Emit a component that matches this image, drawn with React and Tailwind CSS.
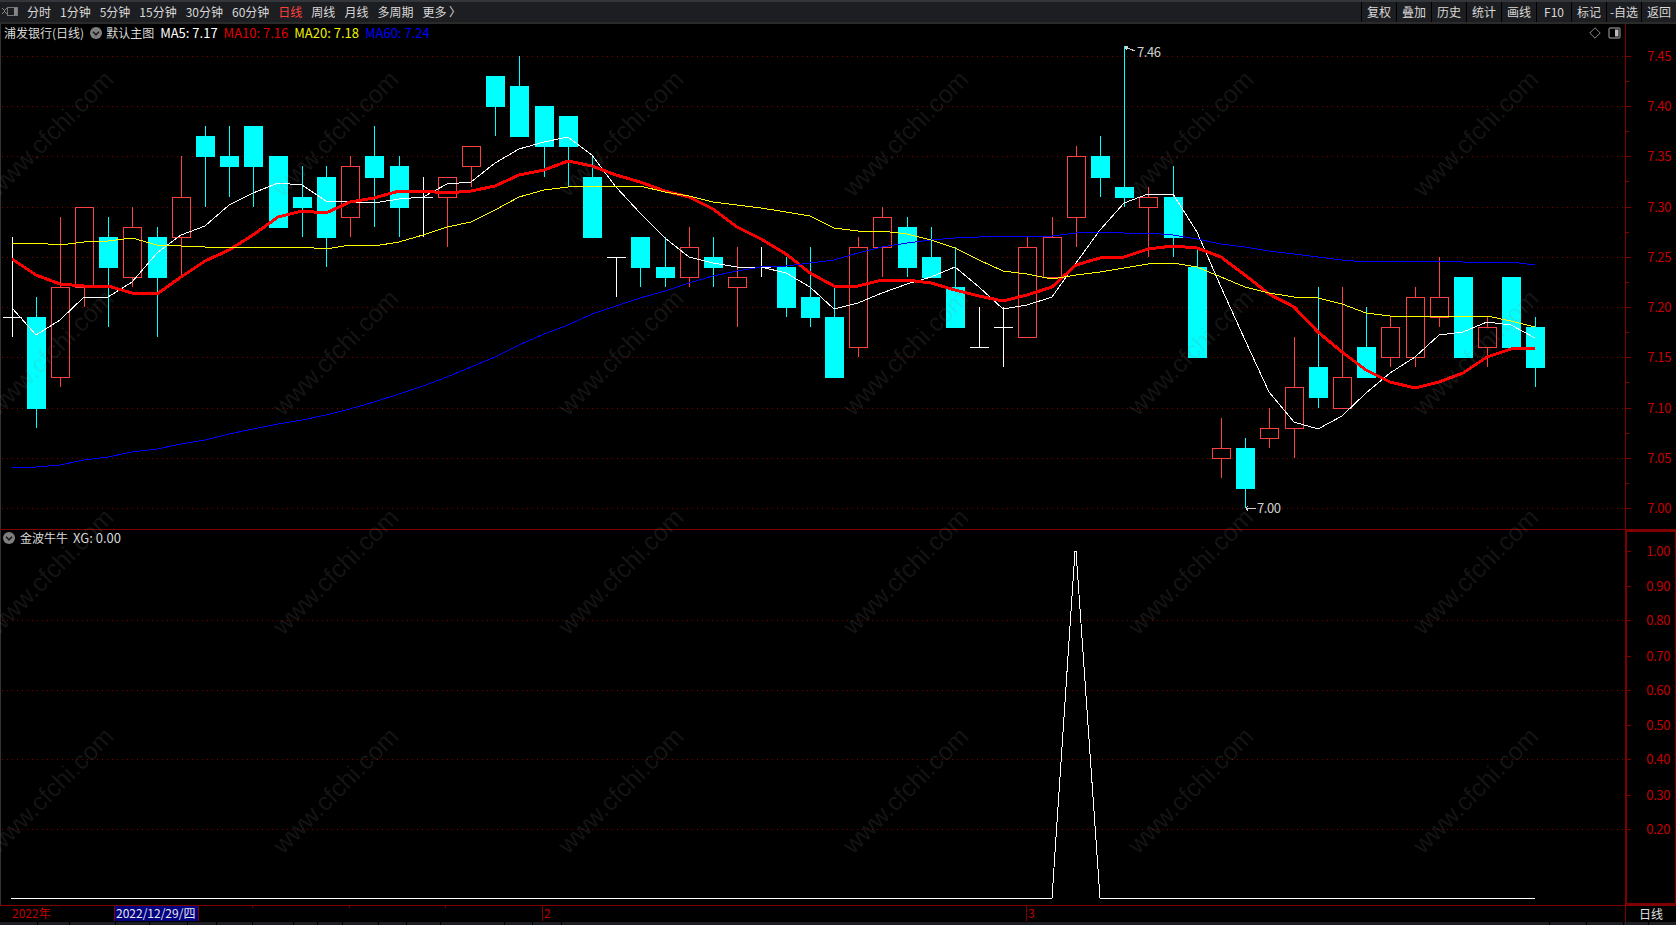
const X0 = 11.5;
const STEP = 24.19;
const xAt = (i) => Math.round(X0 + STEP * i);
const yAt = (p) => Math.round(56 + (7.45 - p) * 1004.4);

// type, body top, body bottom, high, low
const candles = [
  ["w", 7.19, 7.19, 7.27, 7.17],
  ["d", 7.19, 7.10, 7.21, 7.08],
  ["u", 7.22, 7.13, 7.29, 7.12],
  ["u", 7.30, 7.22, 7.30, 7.20],
  ["d", 7.27, 7.24, 7.29, 7.18],
  ["u", 7.28, 7.23, 7.30, 7.22],
  ["d", 7.27, 7.23, 7.28, 7.17],
  ["u", 7.31, 7.27, 7.35, 7.23],
  ["d", 7.37, 7.35, 7.38, 7.30],
  ["d", 7.35, 7.34, 7.38, 7.31],
  ["d", 7.38, 7.34, 7.38, 7.30],
  ["d", 7.35, 7.28, 7.35, 7.28],
  ["d", 7.31, 7.30, 7.34, 7.27],
  ["d", 7.33, 7.27, 7.34, 7.24],
  ["u", 7.34, 7.29, 7.35, 7.27],
  ["d", 7.35, 7.33, 7.38, 7.28],
  ["d", 7.34, 7.30, 7.35, 7.27],
  ["w", 7.31, 7.31, 7.33, 7.27],
  ["u", 7.33, 7.31, 7.33, 7.26],
  ["u", 7.36, 7.34, 7.36, 7.32],
  ["d", 7.43, 7.40, 7.43, 7.37],
  ["d", 7.42, 7.37, 7.45, 7.37],
  ["d", 7.40, 7.36, 7.40, 7.33],
  ["d", 7.39, 7.36, 7.39, 7.32],
  ["d", 7.33, 7.27, 7.35, 7.27],
  ["w", 7.25, 7.25, 7.25, 7.21],
  ["d", 7.27, 7.24, 7.27, 7.22],
  ["d", 7.24, 7.23, 7.27, 7.22],
  ["u", 7.26, 7.23, 7.28, 7.22],
  ["d", 7.25, 7.24, 7.27, 7.22],
  ["u", 7.23, 7.22, 7.26, 7.18],
  ["w", 7.24, 7.24, 7.26, 7.23],
  ["d", 7.24, 7.20, 7.25, 7.19],
  ["d", 7.21, 7.19, 7.26, 7.18],
  ["d", 7.19, 7.13, 7.22, 7.13],
  ["u", 7.26, 7.16, 7.27, 7.15],
  ["u", 7.29, 7.26, 7.30, 7.23],
  ["d", 7.28, 7.24, 7.29, 7.23],
  ["d", 7.25, 7.23, 7.28, 7.23],
  ["d", 7.22, 7.18, 7.26, 7.18],
  ["w", 7.16, 7.16, 7.20, 7.16],
  ["w", 7.18, 7.18, 7.20, 7.14],
  ["u", 7.26, 7.17, 7.27, 7.17],
  ["u", 7.27, 7.23, 7.29, 7.23],
  ["u", 7.35, 7.29, 7.36, 7.26],
  ["d", 7.35, 7.33, 7.37, 7.31],
  ["d", 7.32, 7.31, 7.46, 7.30],
  ["u", 7.31, 7.30, 7.32, 7.25],
  ["d", 7.31, 7.27, 7.34, 7.25],
  ["d", 7.24, 7.15, 7.26, 7.15],
  ["u", 7.06, 7.05, 7.09, 7.03],
  ["d", 7.06, 7.02, 7.07, 7.00],
  ["u", 7.08, 7.07, 7.10, 7.06],
  ["u", 7.12, 7.08, 7.17, 7.05],
  ["d", 7.14, 7.11, 7.22, 7.10],
  ["u", 7.13, 7.10, 7.22, 7.10],
  ["d", 7.16, 7.13, 7.20, 7.13],
  ["u", 7.18, 7.15, 7.19, 7.14],
  ["u", 7.21, 7.15, 7.22, 7.14],
  ["u", 7.21, 7.19, 7.25, 7.18],
  ["d", 7.23, 7.15, 7.23, 7.15],
  ["u", 7.18, 7.16, 7.19, 7.14],
  ["d", 7.23, 7.16, 7.23, 7.16],
  ["d", 7.18, 7.14, 7.19, 7.12],
];

const ma5 = [308,335,320,297,297,282,253,235,226,205,193,183,185,201,202,203,199,197,184,182,163,149,142,137,155,187,213,238,257,263,267,267,273,287,309,303,293,284,277,267,287,309,305,297,263,230,203,194,194,232,287,340,392,422,429,416,393,373,357,335,332,322,325,338];
const ma10 = [259,275,284,286,286,293,294,277,261,250,235,217,211,213,202,198,191,191,193,191,186,175,170,161,166,175,182,191,197,209,227,239,254,273,286,286,280,280,283,290,296,301,295,287,265,258,257,249,246,248,257,275,294,307,332,352,370,382,388,382,373,357,349,348];
const ma20 = [244,243,245,242,241,238,245,246,247,248,247,247,247,249,245,246,242,235,227,222,210,197,190,187,186,187,186,192,196,202,205,208,212,216,228,231,231,234,240,248,260,271,274,279,275,272,268,264,263,267,277,287,293,297,298,304,313,316,317,316,316,316,321,327];
const ma60 = [467,467,465,460,457,452,449,444,440,434,429,424,420,415,409,402,394,386,377,367,357,345,334,325,314,306,298,291,283,276,271,267,266,263,260,253,247,243,240,238,237,236,236,236,233,232,233,233,235,239,244,247,251,254,257,260,262,261,261,261,262,262,262,265];

const topLabels = ["7.45","7.40","7.35","7.30","7.25","7.20","7.15","7.10","7.05","7.00"];
const subLabels = [
  ["1.00", 551], ["0.90", 586], ["0.80", 620], ["0.70", 656], ["0.60", 690],
  ["0.50", 725], ["0.40", 759], ["0.30", 795], ["0.20", 829],
];
const subGrid = [620, 690, 759, 829];
const leftTabs = ["分时","1分钟","5分钟","15分钟","30分钟","60分钟","日线","周线","月线","多周期","更多 〉"];
const rightTabs = ["复权","叠加","历史","统计","画线","F10","标记","-自选","返回"];
const stripCells = [
  "w-[37px]","w-[31px]","w-[45px]","w-[33px]","w-[37px]","w-[28px]","w-[35px]","w-[40px]","w-[23px]","w-[24px]","w-[35px]","w-[27px]","w-[33px]","w-[63px]","w-[27px]","w-[28px]","flex-1","w-[36px]","w-[36px]","w-[24px]","w-[27px]",
];

const toPoints = (arr) => arr.map((y, i) => `${xAt(i)},${y}`).join(" ");

function Candle({ c, i }) {
  const [type, top, bot, hi, lo] = c;
  const x = xAt(i);
  const yTop = yAt(top);
  const yBot = yAt(bot);
  const yHi = yAt(hi);
  const yLo = yAt(lo);
  if (type === "w") {
    return (
      <g stroke="#ffffff" strokeWidth="1">
        <line x1={x + 0.5} x2={x + 0.5} y1={yHi} y2={yLo} />
        <line x1={x - 9} x2={x + 10} y1={yTop + 0.5} y2={yTop + 0.5} />
      </g>
    );
  }
  if (type === "d") {
    return (
      <g>
        <line x1={x + 0.5} x2={x + 0.5} y1={yHi} y2={yLo} stroke="#00ffff" />
        <rect x={x - 9} y={yTop} width="19" height={yBot - yTop + 1} fill="#00ffff" />
      </g>
    );
  }
  return (
    <g stroke="#ff4040">
      <line x1={x + 0.5} x2={x + 0.5} y1={yHi} y2={yTop} />
      <line x1={x + 0.5} x2={x + 0.5} y1={yBot} y2={yLo} />
      <rect x={x - 8.5} y={yTop + 0.5} width="18" height={yBot - yTop} fill="none" />
    </g>
  );
}

function CircleDown() {
  return (
    <svg width="12" height="12" viewBox="0 0 12 12" className="shrink-0">
      <circle cx="6" cy="6" r="6" fill="#7f7f7f" />
      <path d="M3 4.8 6 7.8 9 4.8" fill="none" stroke="#1a1a1a" strokeWidth="1.6" />
    </svg>
  );
}

function TopAxis() {
  const ticks = [];
  topLabels.forEach((l) => ticks.push(yAt(parseFloat(l))));
  return (
    <svg width="50" height="505" viewBox="0 24 50 505" className="block">
      {ticks.map((y) => (
        <line key={y} x1="0" x2="5" y1={y + 0.5} y2={y + 0.5} stroke="#800000" />
      ))}
      {ticks.slice(0, -1).map((y) => (
        <line key={y} x1="0" x2="3" y1={y + 25.5} y2={y + 25.5} stroke="#800000" />
      ))}
      {topLabels.map((l, i) => (
        <text key={l} x="45" y={ticks[i] + 5} textAnchor="end" fontSize="13" fill="#c00000" letterSpacing="-0.4">
          {l}
        </text>
      ))}
    </svg>
  );
}

function SubAxis() {
  return (
    <svg width="48" height="372" viewBox="0 532 48 372" className="block">
      {subLabels.map(([l, y]) => (
        <g key={l}>
          <line x1="0" x2="4" y1={y + 0.5} y2={y + 0.5} stroke="#800000" />
          <text x="43" y={y + 5} textAnchor="end" fontSize="13" fill="#c00000" letterSpacing="-0.4">
            {l}
          </text>
        </g>
      ))}
    </svg>
  );
}

export default function App() {
  return (
    <div className="relative flex h-screen w-full flex-col overflow-hidden bg-black font-['Noto_Sans_CJK_SC',sans-serif] text-[12px] text-[#d8d8d8]">
      {/* toolbar */}
      <div className="flex h-[24px] shrink-0 items-stretch border-t-2 border-b-2 border-t-[#33363b] border-b-[#2a2a2a] bg-[#1d1e21]">
        <svg width="18" height="20" viewBox="0 0 18 20" className="ml-[1px] shrink-0">
          <path d="M1 6 4 9 1 12M6 6 3 9 6 12" fill="none" stroke="#8a8a8a" />
          <rect x="6.5" y="5.5" width="10" height="8" fill="none" stroke="#777" />
          <rect x="13" y="6" width="3" height="7" fill="#888" />
        </svg>
        <div className="ml-[8px] flex items-center gap-[9px] whitespace-nowrap">
          {leftTabs.map((t) => (
            <span key={t} className={t === "日线" ? "text-[#ff4040]" : ""}>{t}</span>
          ))}
        </div>
        <div className="ml-auto flex">
          {rightTabs.map((t) => (
            <div key={t} className="flex w-[35px] items-center justify-center border-l border-black whitespace-nowrap">{t}</div>
          ))}
        </div>
      </div>

      {/* main chart */}
      <div className="flex h-[506px] shrink-0 border-b border-[#800000]">
        <div className="flex w-[1625px] shrink-0 flex-col border-l border-[#333]">
          <div className="flex h-[18px] shrink-0 items-center pb-[1px] whitespace-nowrap">
            <span className="ml-[3px]">浦发银行(日线)</span>
            <span className="ml-[6px]"><CircleDown /></span>
            <span className="ml-[4px]">默认主图</span>
            <span className="ml-[6px] text-[13px] text-white">MA5: 7.17</span>
            <span className="ml-[6px] text-[13px] text-[#e00000]">MA10: 7.16</span>
            <span className="ml-[6px] text-[13px] text-[#f0f000]">MA20: 7.18</span>
            <span className="ml-[6px] text-[13px] text-[#0000ff]">MA60: 7.24</span>
            <svg width="12" height="12" viewBox="0 0 12 12" className="ml-auto">
              <path d="M6 .8 11.2 6 6 11.2 .8 6Z" fill="none" stroke="#8a8a8a" />
            </svg>
            <svg width="13" height="12" viewBox="0 0 13 12" className="mr-[4px] ml-[7px]">
              <rect x="1" y="1" width="11" height="10" rx="1.5" fill="none" stroke="#777" strokeWidth="1.4" />
              <rect x="7" y="2.5" width="3.5" height="7" fill="#bbb" />
            </svg>
          </div>
          <svg width="1624" height="487" viewBox="1 42 1624 487" className="block shrink-0" shapeRendering="crispEdges">
            {topLabels.map((l) => (
              <line key={l} x1="2" x2="1625" y1={yAt(parseFloat(l)) + 0.5} y2={yAt(parseFloat(l)) + 0.5} stroke="#800000" strokeDasharray="1 4" />
            ))}
            {candles.map((c, i) => <Candle key={i} c={c} i={i} />)}
            <polyline points={toPoints(ma5)} fill="none" stroke="#ffffff" strokeWidth="1" />
            <polyline points={toPoints(ma10)} fill="none" stroke="#ff0000" strokeWidth="3" />
            <polyline points={toPoints(ma20)} fill="none" stroke="#ffff00" strokeWidth="1" />
            <polyline points={toPoints(ma60)} fill="none" stroke="#0000ff" strokeWidth="1" />
            <path d="M1125 47 1135 51M1125 47 1128 46M1125 47 1127 50" fill="none" stroke="#d0d0d0" />
            <path d="M1246 508 1256 508M1246 508 1248 506M1246 508 1248 511" fill="none" stroke="#d0d0d0" />
            <text x="1137" y="57" fontSize="13" fill="#d0d0d0" shapeRendering="auto" letterSpacing="-0.4">7.46</text>
            <text x="1257" y="513" fontSize="13" fill="#d0d0d0" shapeRendering="auto" letterSpacing="-0.4">7.00</text>
          </svg>
        </div>
        <div className="flex-1 border-l border-[#800000]">
          <TopAxis />
        </div>
      </div>

      {/* indicator */}
      <div className="flex h-[376px] shrink-0 border-b border-[#800000]">
        <div className="flex w-[1625px] shrink-0 flex-col border-l border-[#333]">
          <div className="flex h-[17px] shrink-0 items-center pb-[2px] whitespace-nowrap">
            <span className="ml-[2px]"><CircleDown /></span>
            <span className="ml-[5px]">金波牛牛</span>
            <span className="ml-[5px] text-[13px]">XG: 0.00</span>
          </div>
          <svg width="1624" height="358" viewBox="1 547 1624 358" className="block shrink-0" shapeRendering="crispEdges">
            {subGrid.map((y) => (
              <line key={y} x1="2" x2="1625" y1={y + 0.5} y2={y + 0.5} stroke="#800000" strokeDasharray="1 4" />
            ))}
            <polyline points="11,898 1052,898 1075,551 1076,551 1100,898 1535,898" fill="none" stroke="#ffffff" strokeWidth="1" />
          </svg>
        </div>
        <div className="flex-1 border-2 border-[#800000]">
          <SubAxis />
        </div>
      </div>

      {/* date row */}
      <div className="flex h-[16px] shrink-0">
        <svg width="1625" height="16" viewBox="0 906 1625 16" className="block shrink-0 overflow-visible">
          <text x="12" y="918" fontSize="12" fill="#c00000">2022年</text>
          <rect x="114" y="906" width="85" height="15" fill="#000080" />
          <line x1="114.5" x2="114.5" y1="906" y2="921" stroke="#800000" />
          <line x1="198.5" x2="198.5" y1="906" y2="921" stroke="#800000" />
          <text x="116" y="918" fontSize="12" fill="#e8e8e8">2022/12/29/四</text>
          {[252, 349, 445].map((x) => (
            <line key={x} x1={x + 0.5} x2={x + 0.5} y1="906" y2="908" stroke="#800000" />
          ))}
          <line x1="542.5" x2="542.5" y1="906" y2="921" stroke="#800000" />
          <text x="544" y="918" fontSize="12" fill="#c00000">2</text>
          <line x1="1026.5" x2="1026.5" y1="906" y2="921" stroke="#800000" />
          <text x="1028" y="918" fontSize="12" fill="#c00000">3</text>
        </svg>
        <div className="flex flex-1 items-center justify-center border-l border-[#800000] text-[#e0e0e0]">日线</div>
      </div>

      {/* bottom strip */}
      <div className="flex h-[3px] shrink-0 gap-px">
        {stripCells.map((w, i) => (
          <div key={i} className={`${w} bg-[#1d1e21]`} />
        ))}
      </div>

      {/* watermark */}
      <div className="pointer-events-none absolute top-[24px] left-[-92px] grid grid-cols-[repeat(6,285px)] grid-rows-[repeat(4,219px)] place-items-center font-['Liberation_Sans',sans-serif]">
        {Array.from({ length: 24 }).map((_, i) => (
          <span key={i} className="-rotate-45 text-[25px] whitespace-nowrap text-[#80808029]">www.cfchi.com</span>
        ))}
      </div>
    </div>
  );
}
